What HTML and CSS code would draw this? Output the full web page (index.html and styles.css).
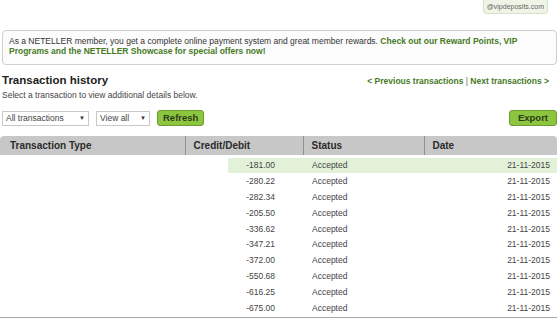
FILE: index.html
```html
<!DOCTYPE html>
<html lang="en">
<head>
	<meta charset="UTF-8">
	<title>Transaction history</title>
	<link rel="stylesheet" href="styles.css">
</head>
<body>
	<div class="page">
		<div class="topbar">
			<span class="account">@vipdeposits.com</span>
		</div>

		<div class="notice">
			As a NETELLER member, you get a complete online payment system and great member rewards.
			<a href="#">Check out our Reward Points, VIP Programs and the NETELLER Showcase for special offers now!</a>
		</div>

		<div class="head">
			<h1>Transaction history</h1>
			<div class="pager">
				<a href="#">&lt; Previous transactions</a> | <a href="#">Next transactions &gt;</a>
			</div>
		</div>
		<p class="hint">Select a transaction to view additional details below.</p>

		<div class="controls">
			<div class="filters">
				<span class="select wide">All transactions <i>&#9660;</i></span>
				<span class="select">View all <i>&#9660;</i></span>
				<span class="btn">Refresh</span>
			</div>
			<span class="btn export">Export</span>
		</div>

		<table class="tx">
			<thead>
				<tr>
					<th class="c-type">Transaction Type</th>
					<th class="c-amt">Credit/Debit</th>
					<th class="c-status">Status</th>
					<th class="c-date">Date</th>
				</tr>
			</thead>
			<tbody>
				<tr class="selected"><td></td><td class="amt">-181.00</td><td>Accepted</td><td class="date">21-11-2015</td></tr>
				<tr><td></td><td class="amt">-280.22</td><td>Accepted</td><td class="date">21-11-2015</td></tr>
				<tr><td></td><td class="amt">-282.34</td><td>Accepted</td><td class="date">21-11-2015</td></tr>
				<tr><td></td><td class="amt">-205.50</td><td>Accepted</td><td class="date">21-11-2015</td></tr>
				<tr><td></td><td class="amt">-336.62</td><td>Accepted</td><td class="date">21-11-2015</td></tr>
				<tr><td></td><td class="amt">-347.21</td><td>Accepted</td><td class="date">21-11-2015</td></tr>
				<tr><td></td><td class="amt">-372.00</td><td>Accepted</td><td class="date">21-11-2015</td></tr>
				<tr><td></td><td class="amt">-550.68</td><td>Accepted</td><td class="date">21-11-2015</td></tr>
				<tr><td></td><td class="amt">-616.25</td><td>Accepted</td><td class="date">21-11-2015</td></tr>
				<tr><td></td><td class="amt">-675.00</td><td>Accepted</td><td class="date">21-11-2015</td></tr>
			</tbody>
		</table>
	</div>
</body>
</html>
```

FILE: styles.css
```css
body{
	margin:0;
	background:#fff;
	font-family:"Liberation Sans", Arial, sans-serif;
	font-size:8.5px;
	color:#333;
}
a{
	color:#467a1f;
	font-weight:bold;
	text-decoration:none;
}
.page{
	width:557px;
}
.topbar{
	display:flex;
	justify-content:flex-end;
	padding-right:9px;
}
.account{
	height:14px;
	line-height:13px;
	padding:0 3px;
	font-size:7px;
	color:#666;
	background:#eef5e7;
	border:1px solid #d3e2c5;
	border-top:0;
	border-radius:0 0 4px 4px;
	box-sizing:border-box;
}
.notice{
	margin:16px 0 0 2px;
	height:35px;
	padding:5px 6px;
	box-sizing:border-box;
	line-height:10px;
	border:1px solid #cfcfcf;
	border-radius:4px;
	background:#fdfcfd;
}
.head{
	display:flex;
	justify-content:space-between;
	align-items:baseline;
	margin:9px 0 0 2px;
}
h1{
	margin:0;
	font-size:11.5px;
	font-weight:bold;
	color:#222;
}
.pager{
	padding-right:8px;
	color:#666;
	font-size:8.5px;
}
.hint{
	margin:4px 0 0 2px;
	color:#444;
}
.controls{
	display:flex;
	justify-content:space-between;
	align-items:center;
	margin:10px 0 0 2px;
}
.filters{
	display:flex;
	align-items:center;
	gap:7px;
}
.select{
	display:flex;
	justify-content:space-between;
	align-items:center;
	width:54px;
	height:15px;
	padding:0 3px;
	box-sizing:border-box;
	border:1px solid #c8c8c8;
	background:#fff;
	color:#444;
}
.select.wide{
	width:87px;
}
.select i{
	font-style:normal;
	font-size:6px;
	color:#333;
}
.btn{
	height:16px;
	line-height:14px;
	padding:0 5px;
	box-sizing:border-box;
	font-size:9.5px;
	font-weight:bold;
	color:#2e3b1c;
	background:#8cc63f;
	border:1px solid #6c9d33;
	border-radius:3px;
}
.btn.export{
	padding:0 8px;
}
.tx{
	margin-top:10px;
	width:557px;
	border-collapse:collapse;
	border-bottom:1px solid #a8a8a8;
	table-layout:fixed;
}
.tx th{
	box-sizing:border-box;
	height:20px;
	padding:0 8px;
	text-align:left;
	font-size:10px;
	font-weight:bold;
	color:#2b2b2b;
	background:#c7c7c7;
	border-left:1px solid #8f8f8f;
	border-bottom:3px solid #fff;
}
.tx th:first-child{
	border-left:0;
	padding-left:10px;
	border-radius:4px 0 0 0;
}
.tx th:last-child{
	border-radius:0 4px 0 0;
}
.c-type{ width:185px; }
.c-amt{ width:118px; }
.c-status{ width:121px; }
.tx td{
	height:15.8px;
	padding:0 9px;
	color:#444;
	white-space:nowrap;
}
.tx td.amt{
	text-align:right;
	padding-right:28px;
}
.tx td.date{
	text-align:right;
	padding-right:7px;
}
.tx tr.selected td{
	background:#e3f1d9;
}
.tx tr.selected td:first-child{
	background:#fff;
}
.tx tr.selected td.amt{
	background:linear-gradient(to right, #fff 43px, #e3f1d9 43px);
}
.tx tbody tr:last-child td{
	padding-bottom:2px;
}
```
